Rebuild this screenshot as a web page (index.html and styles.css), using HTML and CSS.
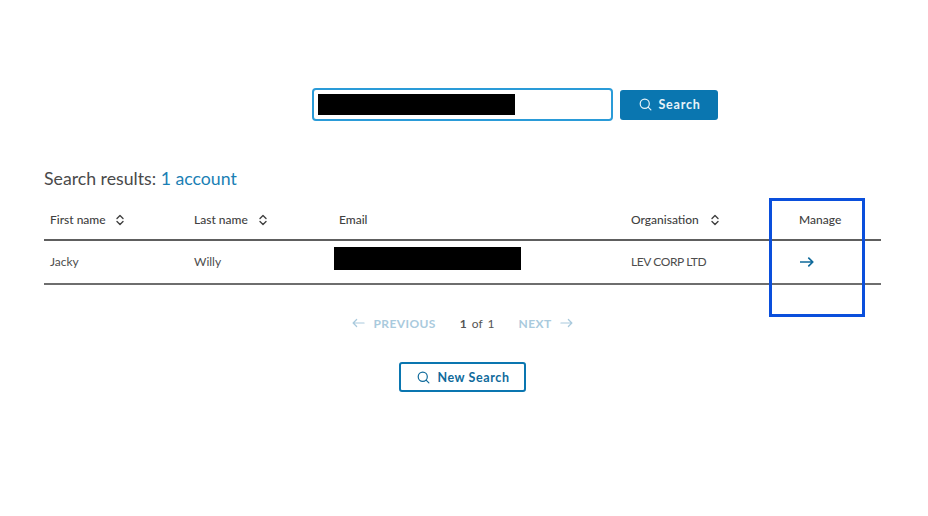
FILE: index.html
```html
<!DOCTYPE html>
<html lang="en">
<head>
<meta charset="utf-8">
<title>Search results</title>
<link rel="stylesheet" href="styles.css">
</head>
<body>
<main class="page">
  <form class="search-row">
    <div class="search-input"><span class="redact-input"></span></div>
    <button type="button" class="btn btn-primary">
      <svg class="icon-search" viewBox="0 0 14 14"><circle cx="6.2" cy="6.2" r="4.9"/><path d="M9.8 9.8 12.8 12.8"/></svg>
      Search
    </button>
  </form>

  <h1 class="results-title">Search results: <span class="results-count">1 account</span></h1>

  <div class="table">
    <div class="row row-head">
      <div class="cell col-first">First name <svg class="sort sort-first" viewBox="0 0 8 12"><path d="M1 4.4 4 1.4 7 4.4M1 7.6 4 10.6 7 7.6"/></svg></div>
      <div class="cell col-last">Last name <svg class="sort" viewBox="0 0 8 12"><path d="M1 4.4 4 1.4 7 4.4M1 7.6 4 10.6 7 7.6"/></svg></div>
      <div class="cell col-email">Email</div>
      <div class="cell col-org">Organisation <svg class="sort sort-org" viewBox="0 0 8 12"><path d="M1 4.4 4 1.4 7 4.4M1 7.6 4 10.6 7 7.6"/></svg></div>
      <div class="cell col-manage">Manage</div>
    </div>
    <div class="row row-body">
      <div class="cell col-first">Jacky</div>
      <div class="cell col-last">Willy</div>
      <div class="cell col-email"><span class="redact-email"></span></div>
      <div class="cell col-org org-name">LEV CORP LTD</div>
      <div class="cell col-manage col-arrow">
        <svg class="arrow" viewBox="0 0 14 10"><path d="M0.5 5H12.5M8.8 1.2 12.8 5 8.8 8.8"/></svg>
      </div>
    </div>
  </div>

  <nav class="pager">
    <span class="pager-link">
      <svg class="pager-arrow" viewBox="0 0 14 10"><path d="M13 5H1.2M5 1.2 1.2 5 5 8.8"/></svg>
      PREVIOUS
    </span>
    <span class="pager-count"><b>1</b> of 1</span>
    <span class="pager-link">
      NEXT
      <svg class="pager-arrow" viewBox="0 0 14 10"><path d="M1 5H12.8M9 1.2 12.8 5 9 8.8"/></svg>
    </span>
  </nav>

  <div class="new-search">
    <button type="button" class="btn btn-outline">
      <svg class="icon-search" viewBox="0 0 14 14"><circle cx="6.2" cy="6.2" r="4.9"/><path d="M9.8 9.8 12.8 12.8"/></svg>
      New Search
    </button>
  </div>

  <div class="highlight"></div>
</main>
</body>
</html>
```

FILE: styles.css
```css
* { box-sizing: border-box; }
html, body { margin: 0; background: #fff; }
body { font-family: Lato, "Open Sans", sans-serif; color: #414141; }
.page { position: relative; width: 928px; height: 516px; padding: 88px 47px 0 44px; overflow: hidden; }

.search-row { display: flex; align-items: center; gap: 7px; padding-left: 268px; height: 33px; }
.search-input { width: 301px; height: 33px; border: 2px solid #2a9bd8; border-radius: 4px; padding: 4px 3px 4px 4px; background: #fff; }
.redact-input { display: block; width: 197px; height: 21px; background: #000; }

.btn { display: inline-flex; align-items: center; justify-content: center; font-family: inherit; font-weight: 700; font-size: 12.5px; letter-spacing: 0.8px; border-radius: 3px; cursor: pointer; }
.btn-primary { width: 98px; height: 30px; background: #0a76b0; color: #e8f3f9; border: 0; gap: 6px; padding-left: 8px; }
.btn-outline { width: 127px; height: 30px; background: #fff; color: #0f6a9b; border: 2px solid #0a76b0; gap: 7px; padding-left: 8px; letter-spacing: 0.6px; }
.icon-search { width: 13px; height: 13px; fill: none; stroke: currentColor; stroke-width: 1.3; stroke-linecap: round; }

.results-title { margin: 46px 0 0; font-size: 17.7px; line-height: 24px; font-weight: 400; color: #4a4a4a; }
.results-count { color: #1a7fb5; }

.table { margin-top: 9px; }
.row { display: flex; align-items: center; font-size: 12px; }
.row-head { height: 41px; border-bottom: 2px solid #5e5e5e; font-weight: 500; color: #414141; }
.row-body { height: 44px; border-bottom: 2px solid #6e6e6e; color: #4d4d4d; padding-bottom: 1px; }
.cell { padding-left: 6px; display: flex; align-items: center; }
.col-first { width: 144px; }
.col-last { width: 145px; }
.col-email { width: 292px; }
.col-org { width: 168px; }
.col-manage { flex: 1; }
.col-arrow { padding-left: 7px; }
.org-name { letter-spacing: -0.4px; }
.sort { width: 8px; height: 12px; margin-left: 11px; fill: none; stroke: #414141; stroke-width: 1.4; stroke-linecap: round; stroke-linejoin: round; }
.sort-first { margin-left: 10px; }
.sort-org { margin-left: 12px; }
.redact-email { display: block; width: 187px; height: 23px; margin-left: -5px; margin-bottom: 7px; background: #000; }
.arrow { width: 14px; height: 10px; fill: none; stroke: #0f6a9b; stroke-width: 1.7; stroke-linecap: round; stroke-linejoin: round; }

.pager { display: flex; justify-content: center; align-items: center; margin-top: 29px; height: 18px; font-size: 12px; }
.pager-link { display: inline-flex; align-items: center; gap: 8px; color: #a9cadd; font-weight: 700; letter-spacing: 0.4px; }
.pager-arrow { width: 13px; height: 10px; fill: none; stroke: #a9cadd; stroke-width: 1.3; stroke-linecap: round; stroke-linejoin: round; }
.pager-count { margin: 0 24px; color: #555; word-spacing: 2px; }
.pager-count b { font-weight: 700; }

.new-search { display: flex; justify-content: center; margin-top: 30px; }

.highlight { position: absolute; left: 769px; top: 198px; width: 96px; height: 119px; border: 3px solid #0a4fdc; }
```
